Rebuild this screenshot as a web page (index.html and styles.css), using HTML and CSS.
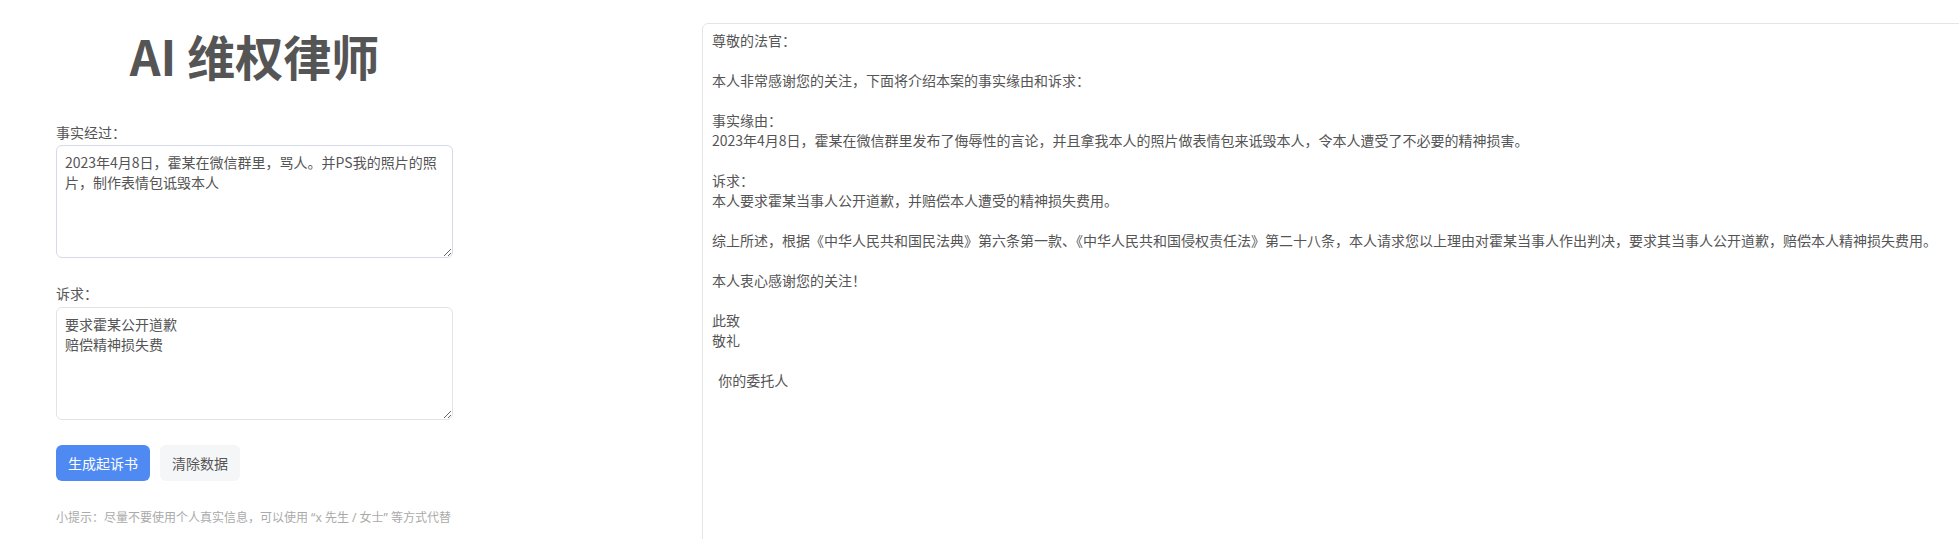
FILE: index.html
```html
<!DOCTYPE html>
<html lang="zh-CN">
<head>
  <meta charset="UTF-8">
  <meta name="viewport" content="width=device-width, initial-scale=1.0">
  <title>AI 维权律师</title>
  <link rel="stylesheet" href="styles.css">
</head>
<body>
  <div id="app">
    <!-- 左侧：输入表单 -->
    <div class="form-col">
      <h1>AI 维权律师</h1>

      <label class="field-label" for="facts">事实经过：</label>
      <textarea id="facts" class="field hovered">2023年4月8日，霍某在微信群里，骂人。并PS我的照片的照片，制作表情包诋毁本人</textarea>

      <label class="field-label" for="claims">诉求：</label>
      <textarea id="claims" class="field">要求霍某公开道歉
赔偿精神损失费</textarea>

      <div class="actions">
        <button class="btn btn-primary">生成起诉书</button>
        <button class="btn btn-plain">清除数据</button>
      </div>

      <p class="tip">小提示：尽量不要使用个人真实信息，可以使用 “x 先生 / 女士” 等方式代替</p>
    </div>

    <!-- 右侧：生成结果 -->
    <div class="output">尊敬的法官：

本人非常感谢您的关注，下面将介绍本案的事实缘由和诉求：

事实缘由：
2023年4月8日，霍某在微信群里发布了侮辱性的言论，并且拿我本人的照片做表情包来诋毁本人，令本人遭受了不必要的精神损害。

诉求：
本人要求霍某当事人公开道歉，并赔偿本人遭受的精神损失费用。

综上所述，根据《中华人民共和国民法典》第六条第一款、《中华人民共和国侵权责任法》第二十八条，本人请求您以上理由对霍某当事人作出判决，要求其当事人公开道歉，赔偿本人精神损失费用。

本人衷心感谢您的关注！

此致
敬礼

  你的委托人</div>
  </div>
</body>
</html>
```

FILE: styles.css
```css
body {
  margin: 0;
  padding: 0;
  background: #fff;
  color: #555;
  font-family: "Noto Sans CJK SC", "Noto Sans", sans-serif;
  font-size: 14px;
  overflow: hidden;
}

#app {
  display: flex;
  align-items: flex-start;
  padding-left: 56px;
}

.form-col {
  width: 397px;
  flex: 0 0 397px;
  display: flex;
  flex-direction: column;
}

h1 {
  margin: 26px 0 0;
  font-size: 48px;
  line-height: 58px;
  font-weight: 700;
  text-align: center;
  color: #555;
}

.field-label {
  display: block;
  line-height: 20px;
  margin: 38px 0 3px;
}

.field + .field-label {
  margin-top: 25px;
  margin-bottom: 4px;
}

.field {
  box-sizing: border-box;
  width: 397px;
  height: 113px;
  padding: 6px 8px;
  border: 1px solid #e3e3e3;
  border-radius: 6px;
  font-family: inherit;
  font-size: 14px;
  line-height: 20px;
  color: #555;
  outline: none;
}

.field.hovered {
  border-color: #d6d9e8;
}

.actions {
  display: flex;
  gap: 10px;
  margin-top: 25px;
}

.btn {
  height: 36px;
  padding: 0 12px;
  border: none;
  border-radius: 6px;
  font-family: inherit;
  font-size: 14px;
  cursor: pointer;
}

.btn-primary {
  background-color: #4f89f2;
  color: #fff;
}

.btn-primary:hover {
  background-color: #6497f4;
}

.btn-plain {
  background-color: #f5f6f8;
  color: #555;
}

.tip {
  margin: 28px 0 0;
  font-family: "Noto Sans", "Noto Sans CJK SC", sans-serif;
  font-size: 12px;
  line-height: 17px;
  white-space: nowrap;
  color: #aaa;
}

.output {
  flex: 0 0 1300px;
  height: 560px;
  margin: 23px 0 0 249px;
  padding: 6px 9px;
  border: 1px solid #e5e5e5;
  border-radius: 6px;
  line-height: 20px;
  white-space: pre-wrap;
  color: #555;
}
```
